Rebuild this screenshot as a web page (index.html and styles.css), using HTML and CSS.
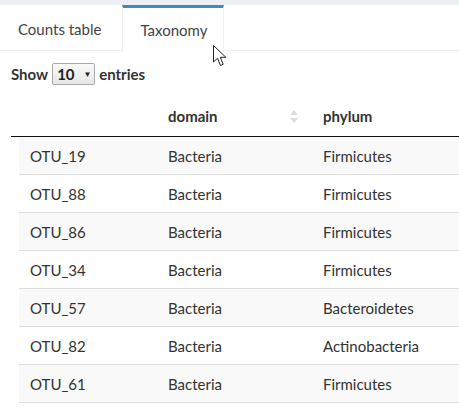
FILE: index.html
```html
<!DOCTYPE html>
<html>
<head>
<meta charset="utf-8">
<link rel="stylesheet" href="styles.css">
</head>
<body>
<div class="topband"></div>
<div class="tabs">
  <div class="tab">Counts table</div>
  <div class="tab active">Taxonomy</div>
</div>
<div class="content">
  <div class="length">Show <span class="select"><span>10</span><span class="caret">▼</span></span> entries</div>
  <div class="table">
    <div class="thead">
      <div class="th"></div>
      <div class="th sortable">domain<svg class="sort" width="8" height="13" viewBox="0 0 8 13"><path d="M4 0 L8 5 H0 Z M4 13 L8 8 H0 Z" fill="#dcdcdc"/></svg></div>
      <div class="th">phylum</div>
    </div>
    <div class="tbody">
      <div class="tr odd"><div class="td">OTU_19</div><div class="td">Bacteria</div><div class="td">Firmicutes</div></div>
      <div class="tr"><div class="td">OTU_88</div><div class="td">Bacteria</div><div class="td">Firmicutes</div></div>
      <div class="tr odd"><div class="td">OTU_86</div><div class="td">Bacteria</div><div class="td">Firmicutes</div></div>
      <div class="tr"><div class="td">OTU_34</div><div class="td">Bacteria</div><div class="td">Firmicutes</div></div>
      <div class="tr odd"><div class="td">OTU_57</div><div class="td">Bacteria</div><div class="td">Bacteroidetes</div></div>
      <div class="tr"><div class="td">OTU_82</div><div class="td">Bacteria</div><div class="td">Actinobacteria</div></div>
      <div class="tr odd"><div class="td">OTU_61</div><div class="td">Bacteria</div><div class="td">Firmicutes</div></div>
    </div>
  </div>
</div>
<svg class="cursor" width="15" height="22" viewBox="0 0 15 22"><path d="M0.5 0.5 V17 L4.5 13.2 L7.5 20.5 L10.2 19.3 L7.3 12.3 H12.8 Z" fill="#fff" stroke="#222" stroke-width="1" stroke-linejoin="round"/></svg>
</body>
</html>
```

FILE: styles.css
```css
html, body {
  margin: 0;
  padding: 0;
}
body {
  width: 459px;
  height: 408px;
  overflow: hidden;
  background: #fff;
  font-family: "Lato", "Liberation Sans", sans-serif;
  font-size: 15px;
  color: #333;
  position: relative;
}
.topband {
  height: 5px;
  background: #ecf0f5;
}
.tabs {
  display: flex;
  align-items: flex-start;
  gap: 2px;
  height: 45px;
  border-bottom: 1px solid #f0f0f0;
}
.tab {
  height: 45px;
  box-sizing: border-box;
  padding: 3px 19px 0 18px;
  display: flex;
  align-items: center;
  color: #444;
  font-size: 15px;
}
.tab.active {
  height: 47px;
  border-top: 3px solid #3c8dbc;
  border-left: 1px solid #f0f0f0;
  border-right: 1px solid #f0f0f0;
  padding: 2px 16px 2px 17px;
  background: #fff;
}
.content {
  padding-left: 11px;
}
.length {
  margin-top: 12px;
  height: 22px;
  display: flex;
  align-items: center;
  font-weight: bold;
  color: #333;
}
.select {
  display: inline-flex;
  align-items: center;
  margin: 0 4px 0 4px;
  height: 22px;
  box-sizing: border-box;
  width: 43px;
  padding: 0 0 0 4px;
  border: 1px solid #aaa;
  border-radius: 2px;
  background: linear-gradient(#fafafa, #e6e6e6);
  font-weight: bold;
  color: #222;
}
.caret {
  font-size: 8px;
  margin-left: 9px;
}
.table {
  margin-top: 11px;
}
.thead {
  display: grid;
  grid-template-columns: 146px 155px 1fr;
  height: 41px;
  box-sizing: border-box;
  border-bottom: 1px solid #111;
  align-items: center;
  font-weight: bold;
  color: #333;
}
.th {
  padding-left: 11px;
}
.th:first-child {
  padding-left: 0;
}
.sortable {
  display: flex;
  align-items: center;
  justify-content: space-between;
  padding-right: 14px;
}
.tbody {
  margin-left: 8px;
}
.tr {
  display: grid;
  grid-template-columns: 138px 155px 1fr;
  height: 38px;
  box-sizing: border-box;
  border-bottom: 1px solid #ddd;
  align-items: center;
}
.tr.odd {
  background: #f9f9f9;
}
.td {
  padding-left: 11px;
}
.cursor {
  position: absolute;
  left: 213px;
  top: 45px;
}
```
